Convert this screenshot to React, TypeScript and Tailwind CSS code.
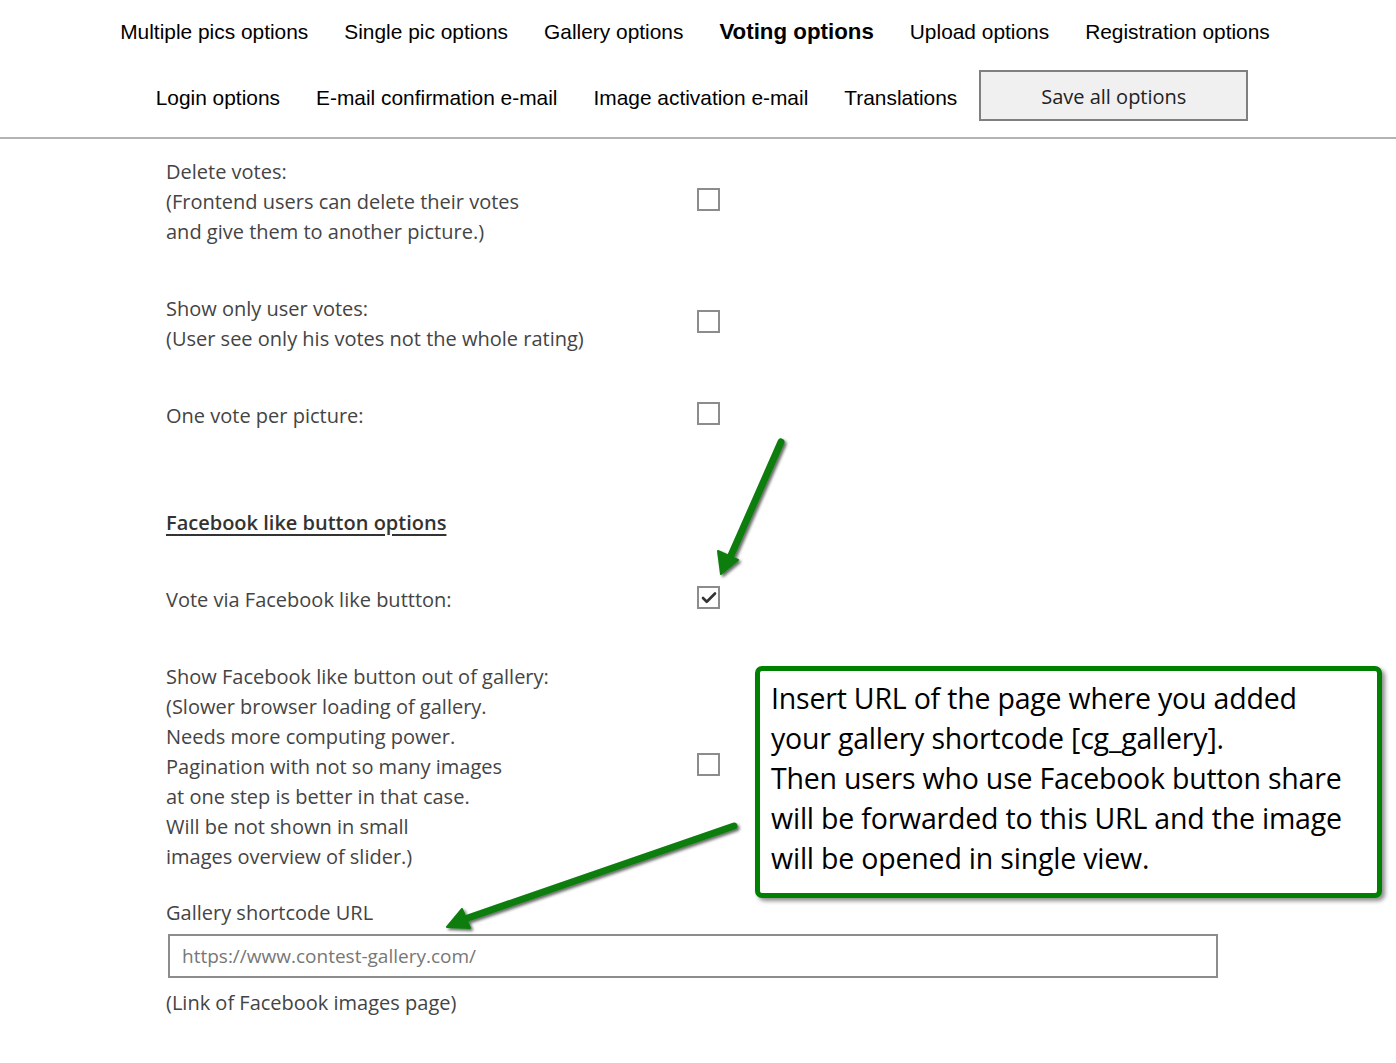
import { Check } from "lucide-react";

const NAV_TOP = ["Multiple pics options", "Single pic options", "Gallery options", "Voting options", "Upload options", "Registration options"];
const NAV_BOTTOM = ["Login options", "E-mail confirmation e-mail", "Image activation e-mail", "Translations"];

function Box({ checked = false }: { checked?: boolean }) {
  return (
    <span className="flex h-[23px] w-[23px] shrink-0 items-center justify-center border-2 border-[#8c8c8c] bg-white">
      {checked && <Check className="h-[18px] w-[18px] text-[#333]" strokeWidth={3.5} />}
    </span>
  );
}

function Row({ lines, checked, className = "" }: { lines: string[]; checked?: boolean; className?: string }) {
  return (
    <div className={"flex items-center " + className}>
      <div className="w-[531px] leading-[30px]">
        {lines.map((l) => <div key={l}>{l}</div>)}
      </div>
      <div className="-mt-[5px]"><Box checked={checked} /></div>
    </div>
  );
}

export default function App() {
  return (
    <div className="relative min-h-[1063px] bg-white">
      {/* Tabs */}
      <div className="border-b-2 border-[#b4b4b4] pb-[5px] font-['Liberation_Sans',Arial,sans-serif] text-[20.9px] text-black">
        <div className="flex h-[64px] items-center justify-center gap-[36px] pr-[6px]">
          {NAV_TOP.map((n) => (
            <span key={n} className={n === "Voting options" ? "text-[22.3px] font-bold" : ""}>{n}</span>
          ))}
        </div>
        <div className="flex h-[68px] items-center justify-center gap-[36px] pl-[8px]">
          {NAV_BOTTOM.map((n) => <span key={n}>{n}</span>)}
          <button className="-ml-[14px] -mt-[5px] h-[51px] w-[269px] border-2 border-[#808080] bg-[#f0f0f0] pt-[3px] font-['Open_Sans',sans-serif] text-[20px] text-[#222]">
            Save all options
          </button>
        </div>
      </div>

      {/* Options */}
      <div className="pl-[166px] pt-[18px] font-['Open_Sans','Noto_Sans',sans-serif] text-[20px] text-[#444]">
        <Row lines={["Delete votes:", "(Frontend users can delete their votes", "and give them to another picture.)"]} className="mb-[47px]" />
        <Row lines={["Show only user votes:", "(User see only his votes not the whole rating)"]} className="mb-[47px]" />
        <Row lines={["One vote per picture:"]} className="mb-[77px]" />
        <div className="mb-[47px] font-semibold leading-[30px] text-[#333] underline underline-offset-[4px]">Facebook like button options</div>
        <Row lines={["Vote via Facebook like buttton:"]} checked className="mb-[47px]" />
        <Row lines={[
          "Show Facebook like button out of gallery:",
          "(Slower browser loading of gallery.",
          "Needs more computing power.",
          "Pagination with not so many images",
          "at one step is better in that case.",
          "Will be not shown in small",
          "images overview of slider.)",
        ]} className="mb-[26px]" />
        <div className="leading-[30px]">Gallery shortcode URL</div>
        <input
          placeholder="https://www.contest-gallery.com/"
          className="ml-[2px] mt-[6px] h-[44px] w-[1050px] border-2 border-[#8c8c8c] px-[12px] text-[19px] text-[#444] placeholder:text-[#777] focus:outline-none"
        />
        <div className="mt-[10px] leading-[30px]">(Link of Facebook images page)</div>
      </div>

      {/* Annotation callout */}
      <div className="absolute left-[755px] top-[666px] h-[232px] w-[627px] rounded-[7px] border-[5px] border-[#008000] bg-white px-[11px] pt-[7px] font-['Open_Sans','Noto_Sans',sans-serif] text-[28.5px] leading-[40px] tracking-[-0.2px] text-black shadow-[3px_3px_4px_rgba(0,0,0,0.45)]">
        Insert URL of the page where you added<br />
        your gallery shortcode [cg_gallery].<br />
        Then users who use Facebook button share<br />
        will be forwarded to this URL and the image<br />
        will be opened in single view.
      </div>

      {/* Annotation arrows */}
      <svg className="pointer-events-none absolute left-0 top-0" width="1396" height="1063">
        <defs>
          <filter id="sh" x="-20%" y="-20%" width="140%" height="140%">
            <feDropShadow dx="2" dy="2" stdDeviation="1.5" floodColor="#000" floodOpacity="0.6" />
          </filter>
        </defs>
        <g filter="url(#sh)" fill="#0a7d0a" stroke="#0a7d0a" strokeLinecap="round" strokeLinejoin="round">
          <line x1="781" y1="442" x2="729" y2="560" strokeWidth="7" />
          <polygon points="721,574 718,551 738,560" strokeWidth="2" />
          <line x1="734" y1="826" x2="462" y2="920" strokeWidth="7" />
          <polygon points="447,927 462,909 470,928" strokeWidth="2" />
        </g>
      </svg>
    </div>
  );
}
